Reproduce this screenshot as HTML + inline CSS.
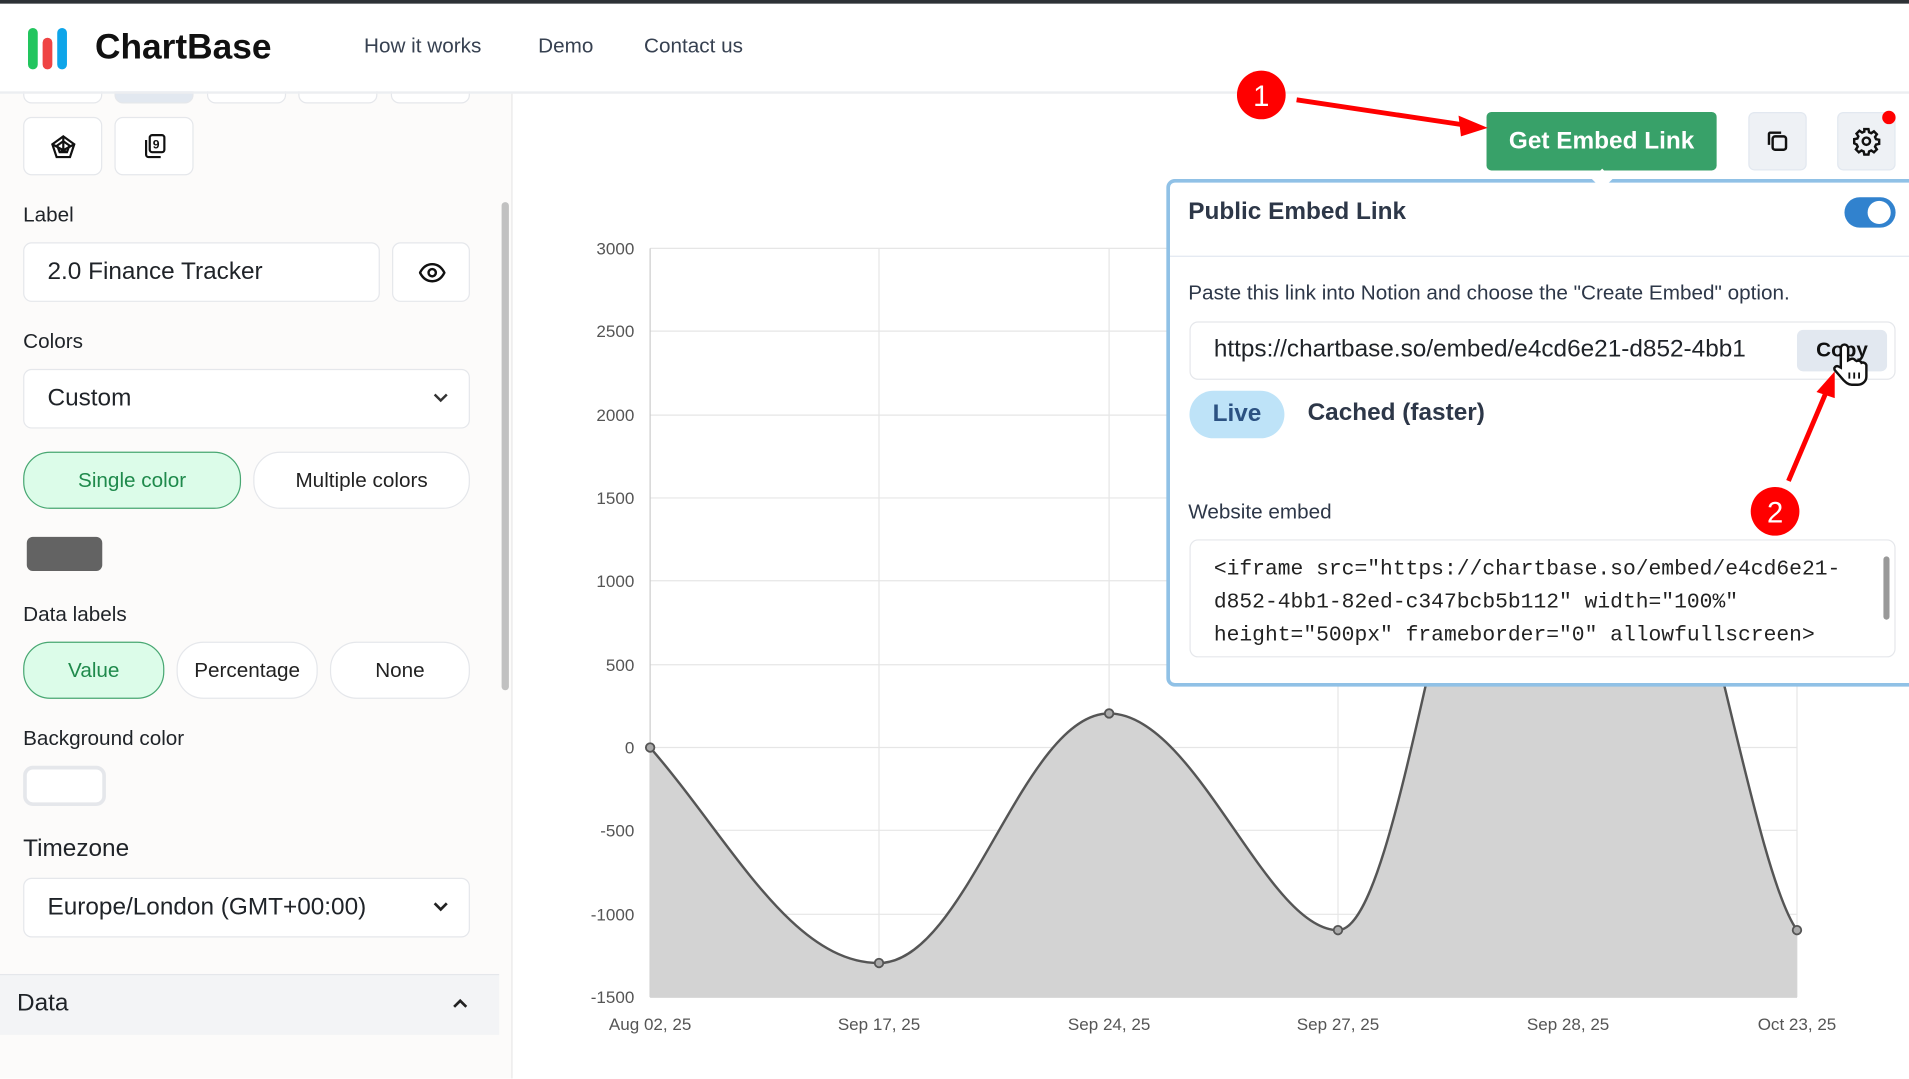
<!DOCTYPE html>
<html><head><meta charset="utf-8"><style>
*{box-sizing:border-box;margin:0;padding:0}
html,body{width:1909px;height:1078px;overflow:hidden;background:#fff;font-family:"Liberation Sans",sans-serif}
#w{position:absolute;left:0;top:0;width:1568px;height:886px;transform:scale(1.21747);transform-origin:0 0;overflow:hidden;background:#fff}
.a{position:absolute}
.t{position:absolute;white-space:nowrap;color:#1f2328}
.box{position:absolute;border:1px solid #e5e7eb;border-radius:7px;background:#fff}
.pill{position:absolute;border:1px solid #e5e7eb;border-radius:22px;background:#fff;display:flex;align-items:center;justify-content:center;font-size:17px;color:#222}
.on{background:#dcfce9;border-color:#48a772;color:#1f8a4c}
</style></head><body><div id="w">
<!-- sidebar -->
<div class="a" style="left:0;top:77px;width:421px;height:809px;background:#fcfbfa;border-right:1px solid #e8e8e8"></div>
<div class="a" style="left:412px;top:166px;width:6px;height:401px;background:#c1c1c1;border-radius:3px"></div>
<div class="box" style="left:19px;top:50px;width:65px;height:35px"></div>
<div class="box" style="left:94px;top:50px;width:65px;height:35px;background:#e2e8f0"></div>
<div class="box" style="left:170px;top:50px;width:65px;height:35px"></div>
<div class="box" style="left:245px;top:50px;width:65px;height:35px"></div>
<div class="box" style="left:321px;top:50px;width:65px;height:35px"></div>
<!-- header -->
<div class="a" style="left:0;top:0;width:1568px;height:75px;background:#fff"></div>
<div class="a" style="left:0;top:0;width:1568px;height:3px;background:#2d3236"></div>
<div class="a" style="left:0;top:75px;width:1568px;height:2px;background:#eceef1"></div>
<div class="a" style="left:23px;top:23px;width:8px;height:34px;border-radius:4px;background:#22c55e"></div>
<div class="a" style="left:35px;top:31px;width:8px;height:26px;border-radius:4px;background:#ef4444"></div>
<div class="a" style="left:47px;top:23px;width:8px;height:34px;border-radius:4px;background:#0ea5e9"></div>
<div class="t" style="left:78px;top:23px;font-size:29px;font-weight:bold;color:#111">ChartBase</div>
<div class="t" style="left:299px;top:28px;font-size:17px;color:#374151">How it works</div>
<div class="t" style="left:442px;top:28px;font-size:17px;color:#374151">Demo</div>
<div class="t" style="left:529px;top:28px;font-size:17px;color:#374151">Contact us</div>

<div class="box" style="left:19px;top:96px;width:65px;height:48px"><svg class="a" style="left:21px;top:13px" width="22" height="22" viewBox="0 0 22 22" fill="none" stroke="#111" stroke-width="1.8"><path d="M11 2L20 8.5 16.5 19H5.5L2 8.5Z"/><path d="M11 6L16 9.5 14 15H8L6 9.5Z"/><path d="M11 2V15M2 8.5L14 15M20 8.5L8 15"/></svg></div>
<div class="box" style="left:94px;top:96px;width:65px;height:48px"><svg class="a" style="left:21px;top:12px" width="22" height="22" viewBox="0 0 22 22" fill="none" stroke="#111" stroke-width="1.8"><rect x="7" y="2" width="12" height="14" rx="2"/><path d="M4 6v12a2 2 0 0 0 2 2h10"/><text x="9.5" y="13" font-size="10" font-family="Liberation Sans" fill="#111" stroke="none" font-weight="bold">9</text></svg></div>
<div class="t" style="left:19px;top:167px;font-size:17px">Label</div>
<div class="box" style="left:19px;top:199px;width:293px;height:49px"></div>
<div class="t" style="left:39px;top:212px;font-size:20px">2.0 Finance Tracker</div>
<div class="box" style="left:322px;top:199px;width:64px;height:49px"><svg class="a" style="left:21px;top:14px" width="22" height="20" viewBox="0 0 22 20" fill="none" stroke="#111" stroke-width="2"><path d="M1 10C4 4 8 3 11 3s7 1 10 7c-3 6-7 7-10 7S4 16 1 10Z"/><circle cx="11" cy="10" r="3"/></svg></div>
<div class="t" style="left:19px;top:271px;font-size:17px">Colors</div>
<div class="box" style="left:19px;top:303px;width:367px;height:49px"></div>
<div class="t" style="left:39px;top:316px;font-size:20px">Custom</div>
<svg class="a" style="left:355px;top:322px" width="14" height="10" viewBox="0 0 14 10" fill="none" stroke="#333" stroke-width="2"><path d="M2 2l5 5 5-5"/></svg>
<div class="pill on" style="left:19px;top:371px;width:179px;height:47px">Single color</div>
<div class="pill" style="left:208px;top:371px;width:178px;height:47px">Multiple colors</div>
<div class="a" style="left:22px;top:441px;width:62px;height:28px;border-radius:5px;background:#636363"></div>
<div class="t" style="left:19px;top:495px;font-size:17px">Data labels</div>
<div class="pill on" style="left:19px;top:527px;width:116px;height:47px">Value</div>
<div class="pill" style="left:145px;top:527px;width:116px;height:47px">Percentage</div>
<div class="pill" style="left:271px;top:527px;width:115px;height:47px">None</div>
<div class="t" style="left:19px;top:597px;font-size:17px">Background color</div>
<div class="a" style="left:19px;top:629px;width:68px;height:33px;border-radius:8px;border:3px solid #e5e7eb;background:#fff"></div>
<div class="t" style="left:19px;top:686px;font-size:20px">Timezone</div>
<div class="box" style="left:19px;top:721px;width:367px;height:49px"></div>
<div class="t" style="left:39px;top:734px;font-size:20px">Europe/London (GMT+00:00)</div>
<svg class="a" style="left:355px;top:740px" width="14" height="10" viewBox="0 0 14 10" fill="none" stroke="#222" stroke-width="2.2"><path d="M2 2l5 5 5-5"/></svg>
<div class="a" style="left:0;top:800px;width:410px;height:50px;background:#f3f4f6;border-top:1px solid #e5e7eb"></div>
<div class="t" style="left:14px;top:813px;font-size:20px">Data</div>
<svg class="a" style="left:371px;top:819px" width="14" height="10" viewBox="0 0 14 10" fill="none" stroke="#222" stroke-width="2.2"><path d="M2 8l5-5 5 5"/></svg>
<!-- chart -->
<svg class="a" style="left:0;top:0" width="1568" height="886">
<g stroke="#e6e6e6" stroke-width="1">
<line x1="534" y1="204" x2="1476" y2="204"/><line x1="534" y1="272" x2="1476" y2="272"/><line x1="534" y1="341" x2="1476" y2="341"/><line x1="534" y1="409" x2="1476" y2="409"/><line x1="534" y1="477" x2="1476" y2="477"/><line x1="534" y1="546" x2="1476" y2="546"/><line x1="534" y1="614" x2="1476" y2="614"/><line x1="534" y1="682" x2="1476" y2="682"/><line x1="534" y1="751" x2="1476" y2="751"/>
<line x1="722" y1="204" x2="722" y2="819"/><line x1="911" y1="204" x2="911" y2="819"/><line x1="1099" y1="204" x2="1099" y2="819"/><line x1="1288" y1="204" x2="1288" y2="819"/><line x1="1476" y1="204" x2="1476" y2="819"/>
</g>
<line x1="534" y1="204" x2="534" y2="819" stroke="#ccc"/>
<line x1="534" y1="819" x2="1476" y2="819" stroke="#ccc"/>
<path d="M534 614C600 690 650 791 722 791S840 586 911 586S1040 764 1099 764S1200 260 1288 260S1430 700 1476 764L1476 819L534 819Z" fill="#d3d3d3"/>
<path d="M534 614C600 690 650 791 722 791S840 586 911 586S1040 764 1099 764S1200 260 1288 260S1430 700 1476 764" fill="none" stroke="#555" stroke-width="2"/>
<g fill="#aaa" stroke="#555" stroke-width="1.5"><circle cx="534" cy="614" r="3.5"/><circle cx="722" cy="791" r="3.5"/><circle cx="911" cy="586" r="3.5"/><circle cx="1099" cy="764" r="3.5"/><circle cx="1476" cy="764" r="3.5"/></g>
<g font-family="Liberation Sans" font-size="14" fill="#555" text-anchor="end">
<text x="521" y="209">3000</text><text x="521" y="277">2500</text><text x="521" y="346">2000</text><text x="521" y="414">1500</text><text x="521" y="482">1000</text><text x="521" y="551">500</text><text x="521" y="619">0</text><text x="521" y="687">-500</text><text x="521" y="756">-1000</text><text x="521" y="824">-1500</text>
</g>
<g font-family="Liberation Sans" font-size="14" fill="#555" text-anchor="middle">
<text x="534" y="846">Aug 02, 25</text><text x="722" y="846">Sep 17, 25</text><text x="911" y="846">Sep 24, 25</text><text x="1099" y="846">Sep 27, 25</text><text x="1288" y="846">Sep 28, 25</text><text x="1476" y="846">Oct 23, 25</text>
</g>
</svg>
<!-- toolbar -->
<div class="a" style="left:1221px;top:92px;width:189px;height:48px;background:#38a169;border-radius:4px;color:#fff;font-size:20px;font-weight:bold;display:flex;align-items:center;justify-content:center">Get Embed Link</div>
<div class="a" style="left:1436px;top:92px;width:48px;height:48px;background:#eef1f5;border:1px solid #e2e8f0;border-radius:5px"><svg class="a" style="left:13px;top:13px" width="20" height="20" viewBox="0 0 20 20" fill="none" stroke="#111" stroke-width="2"><rect x="6" y="6" width="11" height="11" rx="2"/><path d="M3 13V4a1 1 0 0 1 1-1h9"/></svg></div>
<div class="a" style="left:1509px;top:92px;width:48px;height:48px;background:#eef1f5;border:1px solid #e2e8f0;border-radius:5px"><svg class="a" style="left:11px;top:11px" width="24" height="24" viewBox="0 0 24 24" fill="none" stroke="#111" stroke-width="2"><circle cx="12" cy="12" r="3"/><path d="M10.3 2h3.4l.5 2.6 1.8.8 2.2-1.5 2.4 2.4-1.5 2.2.8 1.8 2.6.5v3.4l-2.6.5-.8 1.8 1.5 2.2-2.4 2.4-2.2-1.5-1.8.8-.5 2.6h-3.4l-.5-2.6-1.8-.8-2.2 1.5-2.4-2.4 1.5-2.2-.8-1.8L2 13.7v-3.4l2.6-.5.8-1.8-1.5-2.2 2.4-2.4 2.2 1.5 1.8-.8Z"/></svg></div>
<div class="a" style="left:1546px;top:91px;width:11px;height:11px;border-radius:50%;background:#f00"></div>
<!-- popover -->
<div class="a" style="left:958px;top:147px;width:630px;height:417px;background:#fff;border:3px solid #90c1e6;border-radius:7px"></div>
<div class="a" style="left:1310px;top:141px;width:12px;height:12px;background:#fff;transform:rotate(45deg)"></div>
<div class="t" style="left:976px;top:163px;font-size:20px;font-weight:bold;color:#2d3748">Public Embed Link</div>
<div class="a" style="left:1515px;top:162px;width:42px;height:25px;border-radius:13px;background:#3182ce"><div class="a" style="left:19px;top:3px;width:19px;height:19px;border-radius:50%;background:#fff"></div></div>
<div class="a" style="left:961px;top:210px;width:607px;height:1px;background:#e2e8f0"></div>
<div class="t" style="left:976px;top:231px;font-size:17px;color:#2d3748">Paste this link into Notion and choose the "Create Embed" option.</div>
<div class="box" style="left:977px;top:264px;width:580px;height:48px;overflow:hidden"></div>
<div class="t" style="left:997px;top:276px;font-size:20px;width:470px;overflow:hidden">https://chartbase.so/embed/e4cd6e21-d852-4bb1</div>
<div class="a" style="left:1476px;top:271px;width:74px;height:34px;background:#e2e8f0;border-radius:5px;font-size:17px;font-weight:bold;display:flex;align-items:center;justify-content:center;color:#111">Copy</div>
<svg class="a" style="left:1504px;top:280px" width="32" height="38" viewBox="0 0 32 38"><path d="M8 22V6a3 3 0 0 1 6 0v10l2-1a3 3 0 0 1 4 1l1 .5a3 3 0 0 1 4 1.5 3 3 0 0 1 4 2v9c0 4-3 7-7 7h-5c-3 0-5-2-7-4l-7-8c-1-2 1-4 3-3Z" fill="#fff" stroke="#111" stroke-width="2"/><path d="M15 26v5M19 26v5M23 26v5" stroke="#111" stroke-width="1.5"/></svg>
<div class="a" style="left:977px;top:321px;width:78px;height:39px;border-radius:20px;background:#bee3f8;color:#2c5282;font-size:20px;font-weight:bold;display:flex;align-items:center;justify-content:center">Live</div>
<div class="t" style="left:1074px;top:328px;font-size:20px;font-weight:bold;color:#2d3748">Cached (faster)</div>
<div class="t" style="left:976px;top:411px;font-size:17px;color:#2d3748">Website embed</div>
<div class="box" style="left:977px;top:443px;width:580px;height:97px"></div>
<div class="a" style="left:1547px;top:457px;width:5px;height:52px;background:#999;border-radius:3px"></div>
<div class="t" style="left:997px;top:455px;font-family:'Liberation Mono',monospace;font-size:17.5px;line-height:27px;color:#222">&lt;iframe src="https://chartbase.so/embed/e4cd6e21-<br>d852-4bb1-82ed-c347bcb5b112" width="100%"<br>height="500px" frameborder="0" allowfullscreen&gt;</div>
<!-- annotations -->
<svg class="a" style="left:0;top:0" width="1568" height="886">
<line x1="1065" y1="82" x2="1205" y2="103" stroke="#f00" stroke-width="4"/>
<path d="M1222 105L1198 95 1200 112Z" fill="#f00"/>
<line x1="1469" y1="395" x2="1500" y2="322" stroke="#f00" stroke-width="4"/>
<path d="M1507 305L1492 322 1507 327Z" fill="#f00"/>
<circle cx="1036" cy="78" r="20" fill="#f00"/>
<circle cx="1458" cy="420" r="20" fill="#f00"/>
<text x="1036" y="87" font-family="Liberation Sans" font-size="24" fill="#fff" text-anchor="middle">1</text>
<text x="1458" y="429" font-family="Liberation Sans" font-size="24" fill="#fff" text-anchor="middle">2</text>
</svg>
</div></body></html>
